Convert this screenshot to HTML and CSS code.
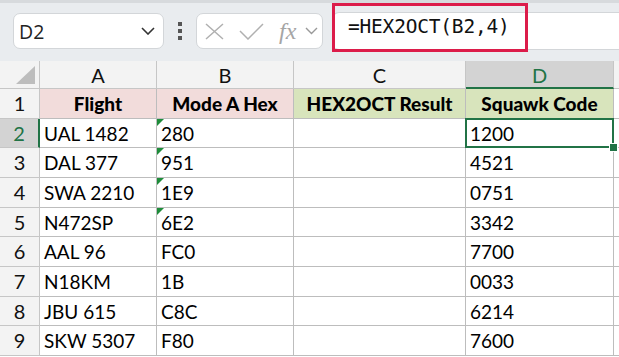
FILE: index.html
```html
<!DOCTYPE html>
<html lang="en">
<head>
  <meta charset="UTF-8">
  <title>HEX2OCT</title>
  <link rel="stylesheet" href="styles.css">
</head>
<body>
  <div class="toolbar">
    <div class="name-box">
      <span>D2</span>
      <svg class="chev" width="14" height="8" viewBox="0 0 14 8"><path d="M1 1 L7 7 L13 1" fill="none" stroke="#333" stroke-width="1.6"/></svg>
    </div>
    <div class="dots"><i></i><i></i><i></i></div>
    <div class="fx-box">
      <svg width="19" height="17" viewBox="0 0 19 17"><path d="M1 1 L18 16 M18 1 L1 16" stroke="#b0b0b0" stroke-width="1.5" fill="none"/></svg>
      <svg width="25" height="17" viewBox="0 0 25 17"><path d="M1 8 L9 16 L24 1" stroke="#b0b0b0" stroke-width="1.5" fill="none"/></svg>
      <span class="fx">fx</span>
      <svg width="13" height="8" viewBox="0 0 13 8"><path d="M1 1 L6.5 6.5 L12 1" fill="none" stroke="#999" stroke-width="1.4"/></svg>
    </div>
    <div class="formula">
      <span class="formula-text">=HEX2OCT(B2,4)</span>
    </div>
  </div>

  <div class="sheet">
    <div class="corner"><span class="tri"></span></div>
    <div class="col-head">A</div>
    <div class="col-head">B</div>
    <div class="col-head">C</div>
    <div class="col-head active">D</div>
    <div class="col-head rest"></div>

    <div class="row-head">1</div>
    <div class="cell hdr pink">Flight</div>
    <div class="cell hdr pink">Mode A Hex</div>
    <div class="cell hdr green">HEX2OCT Result</div>
    <div class="cell hdr green">Squawk Code</div>
    <div class="cell rest"></div>

    <div class="row-head active">2</div>
    <div class="cell">UAL 1482</div>
    <div class="cell flag">280</div>
    <div class="cell"></div>
    <div class="cell selected">1200</div>
    <div class="cell rest"></div>

    <div class="row-head">3</div>
    <div class="cell">DAL 377</div>
    <div class="cell flag">951</div>
    <div class="cell"></div>
    <div class="cell">4521</div>
    <div class="cell rest"></div>

    <div class="row-head">4</div>
    <div class="cell">SWA 2210</div>
    <div class="cell flag">1E9</div>
    <div class="cell"></div>
    <div class="cell">0751</div>
    <div class="cell rest"></div>

    <div class="row-head">5</div>
    <div class="cell">N472SP</div>
    <div class="cell flag">6E2</div>
    <div class="cell"></div>
    <div class="cell">3342</div>
    <div class="cell rest"></div>

    <div class="row-head">6</div>
    <div class="cell">AAL 96</div>
    <div class="cell">FC0</div>
    <div class="cell"></div>
    <div class="cell">7700</div>
    <div class="cell rest"></div>

    <div class="row-head">7</div>
    <div class="cell">N18KM</div>
    <div class="cell">1B</div>
    <div class="cell"></div>
    <div class="cell">0033</div>
    <div class="cell rest"></div>

    <div class="row-head">8</div>
    <div class="cell">JBU 615</div>
    <div class="cell">C8C</div>
    <div class="cell"></div>
    <div class="cell">6214</div>
    <div class="cell rest"></div>

    <div class="row-head">9</div>
    <div class="cell">SKW 5307</div>
    <div class="cell">F80</div>
    <div class="cell"></div>
    <div class="cell">7600</div>
    <div class="cell rest"></div>
  </div>
</body>
</html>
```

FILE: styles.css
```css
body {
  margin: 0;
  width: 619px;
  height: 357px;
  overflow: hidden;
  background: #fff;
  font-family: Lato, "Open Sans", sans-serif;
  color: #000;
}

.toolbar {
  height: 58px;
  border-top: 3px solid #d7dadd;
  background: #e9ecef;
  display: flex;
  align-items: center;
  padding-left: 13px;
}

.name-box {
  width: 151px;
  height: 36px;
  box-sizing: border-box;
  margin-top: -2px;
  background: #fff;
  border: 1px solid #d3d6d9;
  border-radius: 7px;
  display: flex;
  align-items: center;
  justify-content: space-between;
  padding: 0 8px 0 5px;
  font-family: "Open Sans", sans-serif;
  font-size: 19.5px;
  color: #222;
}

.dots {
  width: 32px;
  display: flex;
  flex-direction: column;
  align-items: center;
  gap: 3px;
  margin-top: -2px;
}

.dots i {
  width: 4px;
  height: 4px;
  background: #555;
}

.fx-box {
  width: 127px;
  height: 36px;
  box-sizing: border-box;
  margin-top: -2px;
  background: #fff;
  border: 1px solid #d3d6d9;
  border-radius: 7px;
  display: flex;
  align-items: center;
  padding-left: 8px;
  gap: 15px;
}

.fx-box .fx {
  font-family: "Liberation Serif", serif;
  font-style: italic;
  font-size: 24px;
  color: #a5a5a5;
  margin-left: 0;
  margin-right: -6px;
}

.formula {
  flex: 1;
  height: 36px;
  margin-left: 9px;
  margin-top: -2px;
  background: #fff;
  border: 1px solid #d3d6d9;
  border-right: none;
  border-radius: 7px 0 0 7px;
  position: relative;
}

.formula-text {
  position: absolute;
  left: -1px;
  top: -10px;
  width: 196px;
  height: 49px;
  box-sizing: border-box;
  border: 3px solid #dc1c4a;
  padding-left: 13px;
  line-height: 42px;
  font-family: "DejaVu Sans Mono", monospace;
  font-size: 19.5px;
  letter-spacing: -0.2px;
  color: #111;
}

.sheet {
  display: grid;
  grid-template-columns: 40px 117px 137px 172px 148px 1fr;
  grid-template-rows: 28px 30px 29px 30px 30px 29px 30px 30px 29px 30px;
}

.corner {
  background: #f3f3f3;
  border-right: 1px solid #c6c6c6;
  border-bottom: 1px solid #c6c6c6;
  position: relative;
}

.corner .tri {
  position: absolute;
  right: 4px;
  bottom: 4px;
  width: 0;
  height: 0;
  border-left: 19px solid transparent;
  border-bottom: 18px solid #bdbdbd;
}

.col-head {
  background: #f3f3f3;
  border-right: 1px solid #c6c6c6;
  border-bottom: 1px solid #c6c6c6;
  text-align: center;
  font-size: 20px;
  line-height: 28px;
  color: #111;
}

.col-head.active {
  background: #d3d3d3;
  color: #217346;
  border-bottom: 2px solid #217346;
}

.col-head.rest {
  border-right: none;
}

.row-head {
  background: #f3f3f3;
  border-right: 1px solid #c6c6c6;
  border-bottom: 1px solid #c6c6c6;
  text-align: center;
  font-size: 20px;
  line-height: 29px;
  color: #111;
}

.row-head.active {
  background: #d3d3d3;
  color: #217346;
  border-right: 2px solid #217346;
}

.cell {
  border-right: 1px solid #bdbdbd;
  border-bottom: 1px solid #bdbdbd;
  padding-left: 4px;
  font-size: 19px;
  line-height: 30px;
  white-space: nowrap;
  position: relative;
}

.cell.rest {
  border-right: none;
}

.cell.hdr {
  font-weight: 900;
  text-align: center;
  padding-left: 0;
}

.cell.pink {
  background: #f2dcdb;
}

.cell.green {
  background: #d8e4bc;
}

.cell.flag::before {
  content: "";
  position: absolute;
  left: 0;
  top: 0;
  border-top: 7px solid #1e8c3a;
  border-right: 7px solid transparent;
}

.cell.selected::after {
  content: "";
  position: absolute;
  left: -1px;
  top: -1px;
  right: -1px;
  bottom: -1px;
  border: 2px solid #217346;
}

.cell.selected::before {
  content: "";
  position: absolute;
  right: -5px;
  bottom: -5px;
  width: 7px;
  height: 7px;
  background: #217346;
  border: 1px solid #fff;
  z-index: 2;
}
```
